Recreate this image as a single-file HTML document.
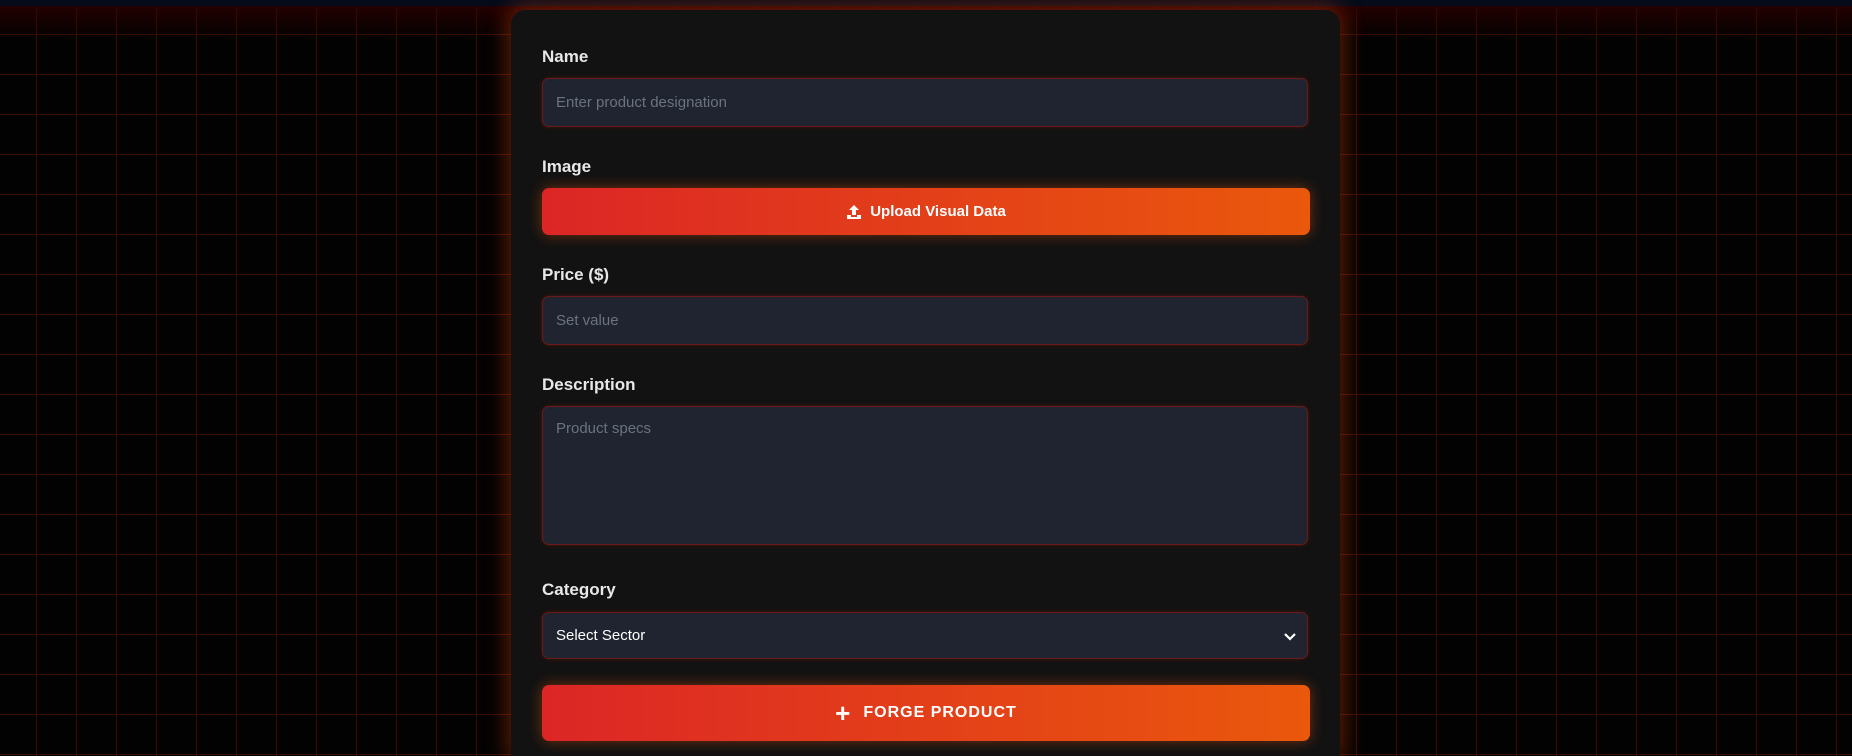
<!DOCTYPE html>
<html><head><style>
html,body{margin:0;padding:0;width:1852px;height:756px;overflow:hidden;background:#000;font-family:"Liberation Sans",sans-serif}
body{position:relative;background-color:#020202;background-image:linear-gradient(to bottom,#050b1a 0,#050b1a 6px,rgba(50,0,0,.7) 6px,rgba(0,0,0,0) 40px),linear-gradient(#3a0c02 1px,transparent 1px),linear-gradient(90deg,#3a0c02 1px,transparent 1px);background-size:100% 100%,40px 40px,40px 40px;background-position:0 0,36px 34px,36px 34px;background-repeat:no-repeat,repeat,repeat}
.card{position:absolute;left:511px;top:10px;width:829px;height:746px;background:#121212;border-radius:14px 14px 0 0;box-shadow:0 0 22px 4px rgba(234,70,10,.4)}
.lbl{position:absolute;left:31px;color:#e8e8ea;font-weight:bold;font-size:17px}
.inp{position:absolute;left:31px;width:766px;background:#1f2430;border:1px solid #6b1a1a;border-radius:7px;box-sizing:border-box;color:#6b7280;font-size:15px;padding-left:13px;box-shadow:0 0 4px rgba(200,40,20,.3)}
.btn{position:absolute;left:31px;width:768px;border-radius:7px;background:linear-gradient(90deg,#dc2626,#ea580c);color:#fff;font-weight:bold;display:flex;align-items:center;justify-content:center;box-shadow:0 0 14px rgba(234,88,12,.45)}
</style></head><body>
<div class="card">
<div class="lbl" style="top:37px">Name</div>
<div class="inp" style="top:68px;height:49px;line-height:47px">Enter product designation</div>
<div class="lbl" style="top:147px">Image</div>
<div class="btn" style="top:178px;height:47px;font-size:15px"><svg width="16" height="16" viewBox="0 0 16 16" style="margin-right:8px"><path d="M8 1 L13 6 H10 V11 H6 V6 H3 Z M1 11 H5 V13 H11 V11 H15 V15 H1 Z" fill="#fff"/></svg>Upload Visual Data</div>
<div class="lbl" style="top:255px">Price ($)</div>
<div class="inp" style="top:286px;height:49px;line-height:47px">Set value</div>
<div class="lbl" style="top:365px">Description</div>
<div class="inp" style="top:396px;height:139px;padding-top:13px;line-height:18px">Product specs</div>
<div class="lbl" style="top:570px">Category</div>
<div class="inp" style="top:602px;height:47px;line-height:45px;color:#fff;font-size:15px">Select Sector<svg width="14" height="10" viewBox="0 0 14 10" style="position:absolute;right:10px;top:19px"><path d="M2 2 L7 7 L12 2" stroke="#fff" stroke-width="2.2" fill="none"/></svg></div>
<div class="btn" style="top:675px;height:56px;font-size:16px;letter-spacing:1px"><span style="font-size:26px;margin-right:12px;font-weight:bold">+</span>FORGE PRODUCT</div>
</div>
</body></html>
